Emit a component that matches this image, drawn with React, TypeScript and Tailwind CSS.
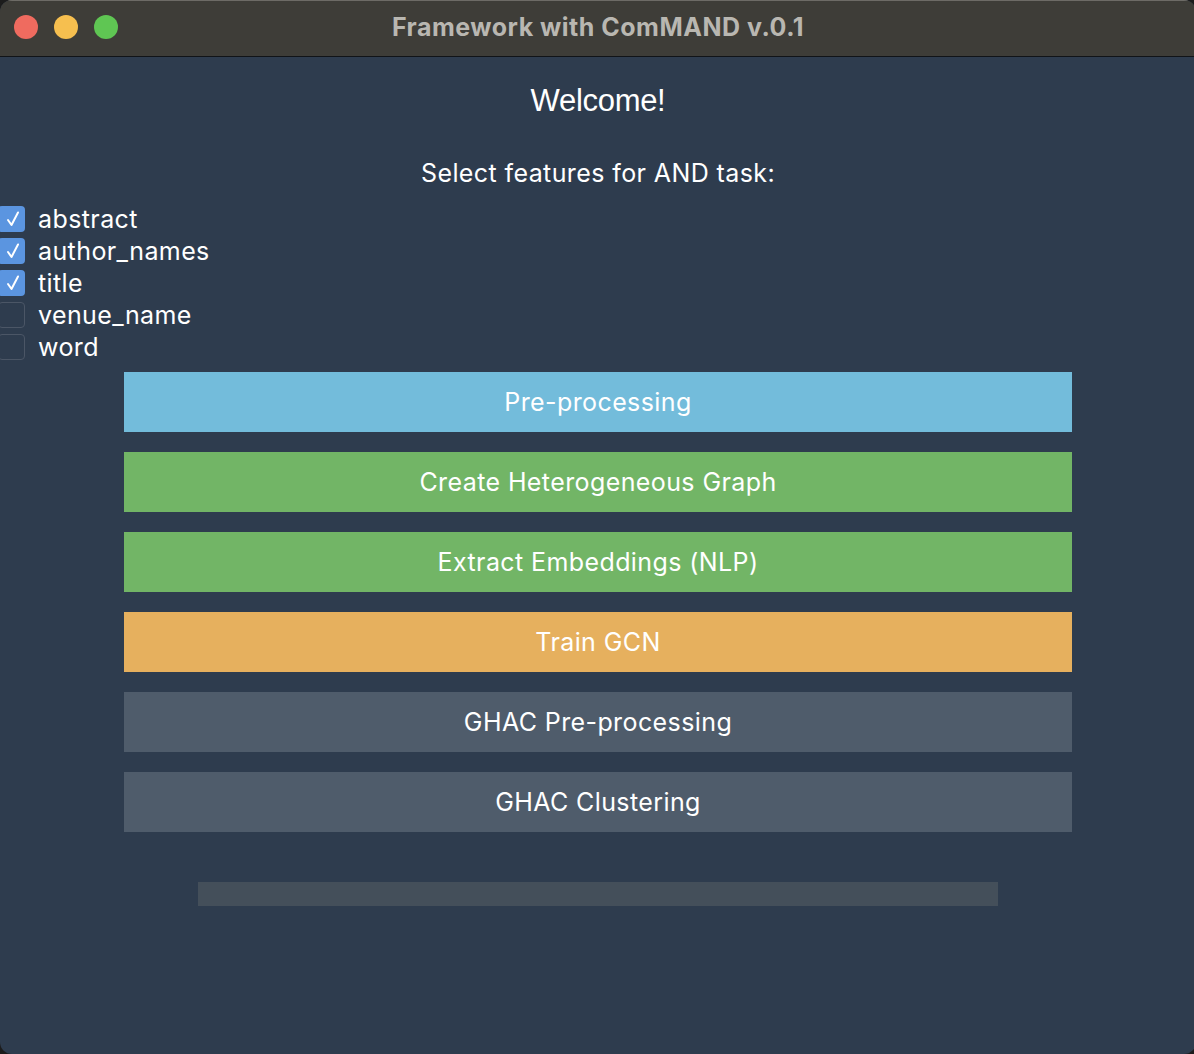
import React from "react";

const features = [
  { name: "abstract", checked: true },
  { name: "author_names", checked: true },
  { name: "title", checked: true },
  { name: "venue_name", checked: false },
  { name: "word", checked: false },
];

const buttons = [
  { label: "Pre-processing", cls: "bg-[#73bcdb]" },
  { label: "Create Heterogeneous Graph", cls: "bg-[#72b566]" },
  { label: "Extract Embeddings (NLP)", cls: "bg-[#72b566]" },
  { label: "Train GCN", cls: "bg-[#e6b05e]" },
  { label: "GHAC Pre-processing", cls: "bg-[#4f5c6b]" },
  { label: "GHAC Clustering", cls: "bg-[#4f5c6b]" },
];

export default function App() {
  return (
    <div className="w-[1194px] h-[1054px] bg-[#1c1c1c] overflow-hidden" style={{ fontFamily: "Inter, 'Noto Sans', sans-serif" }}>
      <div className="w-[1196px] h-[1054px] rounded-[12px] overflow-hidden bg-[#2e3c4e] flex flex-col">
        <div className="relative h-[56px] bg-[#3e3d38] border-t border-[#6d6b66] flex items-center justify-center shrink-0">
          <div className="absolute left-[14px] top-[14px] flex gap-[16px]">
            <div className="w-[24px] h-[24px] rounded-full bg-[#ef6b5f]" />
            <div className="w-[24px] h-[24px] rounded-full bg-[#f6bf4f]" />
            <div className="w-[24px] h-[24px] rounded-full bg-[#5fc653]" />
          </div>
          <span className="text-[25px] font-bold text-[#b9b7b1] tracking-[0.5px] mt-[-1px]">Framework with ComMAND v.0.1</span>
        </div>
        <div className="h-[1px] bg-[#111418] shrink-0" />
        <div className="flex flex-col">
          <div className="h-[86px] flex items-center justify-center">
            <span className="text-[31px] text-white tracking-[-0.3px] mt-[2px]" style={{ fontFamily: "'Liberation Sans', Arial, sans-serif" }}>Welcome!</span>
          </div>
          <div className="h-[60px] flex items-center justify-center">
            <span className="text-[25px] text-white tracking-[0.4px] mt-[2px]">Select features for AND task:</span>
          </div>
          <div className="flex flex-col">
            {features.map((f) => (
              <div key={f.name} className="h-[32px] flex items-center">
                <div
                  className={
                    f.checked
                      ? "ml-[-2px] w-[27px] h-[26px] rounded-[4px] bg-[#5b95e0] flex items-center justify-center"
                      : "ml-[-2px] w-[27px] h-[26px] rounded-[4px] border-[1.5px] border-[#4b5666]"
                  }
                >
                  {f.checked && (
                    <svg width="14" height="16" viewBox="0 0 14 16" className="ml-[2px]">
                      <path d="M2 9 L5.5 14 L12 1.5" fill="none" stroke="white" strokeWidth="2" strokeLinecap="round" strokeLinejoin="round" />
                    </svg>
                  )}
                </div>
                <span className="ml-[13px] text-[25px] text-white leading-none tracking-[0.4px]">{f.name}</span>
              </div>
            ))}
          </div>
          <div className="mt-[9px] ml-[124px] w-[948px] flex flex-col gap-[20px]">
            {buttons.map((b) => (
              <div key={b.label} className={`h-[60px] flex items-center justify-center ${b.cls}`}>
                <span className="text-[25px] text-white tracking-[0.4px] mt-[2px]">{b.label}</span>
              </div>
            ))}
          </div>
          <div className="mt-[50px] ml-[198px] w-[800px] h-[24px] bg-[#444f5a]" />
        </div>
      </div>
    </div>
  );
}
